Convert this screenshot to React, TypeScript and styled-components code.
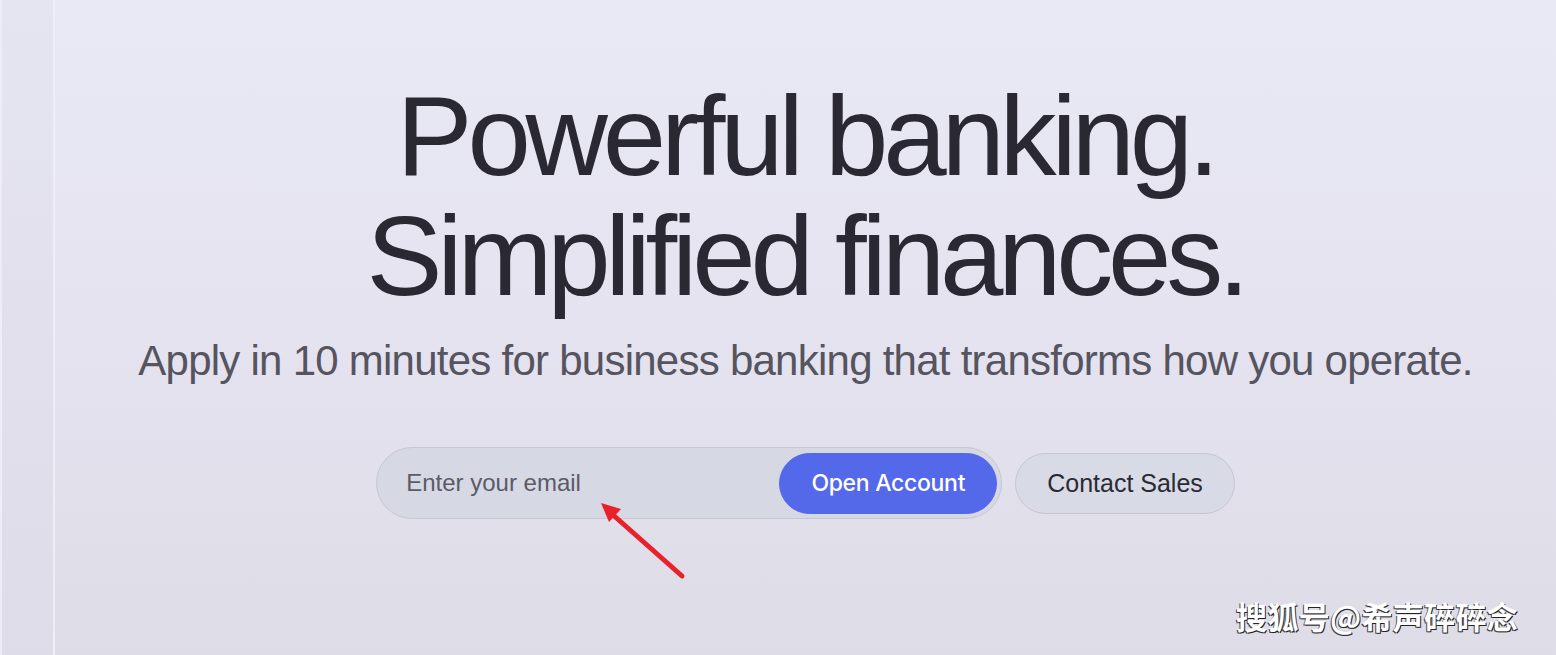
import React from 'react'
import styled, { createGlobalStyle } from 'styled-components'

const GlobalStyle = createGlobalStyle`
  html, body {
    margin: 0;
    padding: 0;
    height: 100%;
  }
  body {
    font-family: 'Liberation Sans', Arial, sans-serif;
    background: #e4e3ef;
    overflow: hidden;
  }
`

const Page = styled.div`
  position: relative;
  display: flex;
  width: 1556px;
  height: 655px;
  background: linear-gradient(180deg, #e9e8f5 0%, #e4e3ef 50%, #dedce7 100%);
`

const Rail = styled.div`
  width: 55px;
  flex-shrink: 0;
  border-left: 2px solid #eeedf7;
  border-right: 2px solid #efeef8;
  box-sizing: border-box;
  background: linear-gradient(180deg, #e5e4f1 0%, #dedce8 100%);
`

const Main = styled.main`
  flex: 1;
  display: flex;
  flex-direction: column;
  align-items: center;
  padding-top: 76px;
`

const Headline = styled.h1`
  margin: 0;
  font-size: 114px;
  line-height: 120px;
  font-weight: 400;
  letter-spacing: -5.2px;
  color: #292833;
  text-align: center;
`

const Subtitle = styled.p`
  margin: 21px 0 0;
  font-size: 42px;
  line-height: 48px;
  letter-spacing: -0.75px;
  color: #55545f;
  text-align: center;
`

const Actions = styled.div`
  display: flex;
  align-items: center;
  gap: 13px;
  margin-top: 62px;
`

const EmailField = styled.form`
  display: flex;
  align-items: center;
  width: 626px;
  height: 72px;
  box-sizing: border-box;
  padding: 0 4px 0 27px;
  border: 1px solid #c6c7d3;
  border-radius: 36px;
  background: #d6d8e4;
`

const EmailInput = styled.input`
  flex: 1;
  border: none;
  background: transparent;
  outline: none;
  font-family: 'Liberation Sans', Arial, sans-serif;
  font-size: 24px;
  color: #2a2a35;
  &::placeholder {
    color: #5b5a67;
  }
`

const Pill = styled.button<{ primary?: boolean }>`
  height: 61px;
  padding: 0 31px;
  border-radius: 31px;
  font-family: ${(p) =>
    p.primary ? "Inter, 'Liberation Sans', sans-serif" : "'Liberation Sans', Arial, sans-serif"};
  font-size: ${(p) => (p.primary ? '23px' : '25px')};
  font-weight: ${(p) => (p.primary ? 500 : 400)};
  letter-spacing: ${(p) => (p.primary ? '-0.3px' : '0')};
  cursor: pointer;
  color: ${(p) => (p.primary ? '#ffffff' : '#2a2a35')};
  background: ${(p) => (p.primary ? '#5468ea' : '#d8dae5')};
  border: 1px solid ${(p) => (p.primary ? '#5468ea' : '#c5c6d2')};
`

const Arrow = styled.svg`
  position: absolute;
  left: 590px;
  top: 495px;
  pointer-events: none;
`

const Watermark = styled.div`
  position: absolute;
  right: 38px;
  bottom: 17px;
  font-family: 'Noto Sans CJK SC', sans-serif;
  font-size: 31px;
  font-weight: 700;
  letter-spacing: 0.3px;
  color: #ffffff;
  text-shadow: 1px 1px 0 #222, -1px 1px 0 #444;
`

const App: React.FC = () => {
  return (
    <>
      <GlobalStyle />
      <Page>
        <Rail />
        <Main>
          <Headline>
            Powerful banking.
            <br />
            Simplified finances.
          </Headline>
          <Subtitle>
            Apply in 10 minutes for business banking that transforms how you
            operate.
          </Subtitle>
          <Actions>
            <EmailField onSubmit={(e) => e.preventDefault()}>
              <EmailInput type="email" placeholder="Enter your email" />
              <Pill primary type="submit">
                Open Account
              </Pill>
            </EmailField>
            <Pill type="button">Contact Sales</Pill>
          </Actions>
        </Main>
        <Arrow width="110" height="90" viewBox="0 0 110 90">
          <line
            x1="92"
            y1="81"
            x2="22"
            y2="19"
            stroke="#e8212b"
            strokeWidth="5"
            strokeLinecap="round"
          />
          <polygon points="11,8 31,14 19,27" fill="#e8212b" />
        </Arrow>
        <Watermark>搜狐号@希声碎碎念</Watermark>
      </Page>
    </>
  )
}

export default App
